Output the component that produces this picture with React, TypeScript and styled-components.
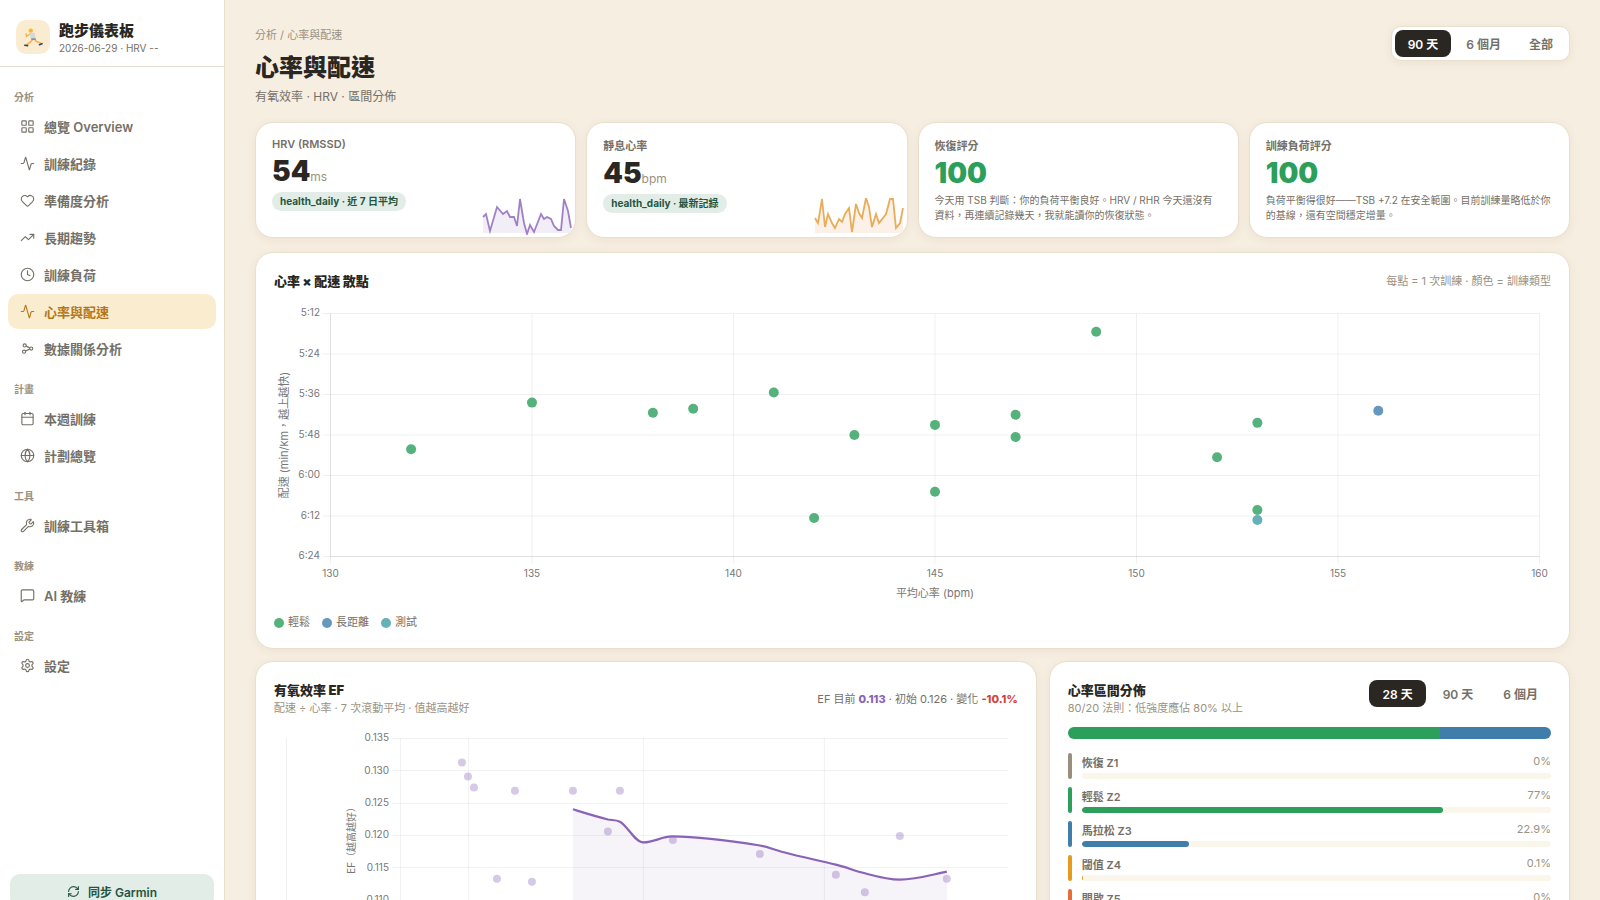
import React, { FC, ReactNode } from 'react'
import styled, { createGlobalStyle } from 'styled-components'
import {
  Activity,
  Calendar,
  Clock,
  Globe,
  Heart,
  LayoutGrid,
  MessageSquare,
  RefreshCw,
  Settings,
  TrendingUp,
  Wrench,
} from 'lucide-react'

const color = {
  ink: '#2a2723',
  text: '#757067',
  muted: '#9a9282',
  line: '#e8dfcc',
  green: '#2c9f5b',
  blue: '#3f7eab',
  teal: '#3d9ea8',
  purple: '#8a63b8',
}

const GlobalStyle = createGlobalStyle`
  *, *::before, *::after {
    box-sizing: border-box;
  }

  html {
    scrollbar-width: none;
  }

  body {
    margin: 0;
    background: #f6eee1;
    color: ${color.ink};
    font-family: Inter, 'Noto Sans CJK TC', sans-serif;
    font-size: 13px;
  }

  button {
    font-family: inherit;
    cursor: pointer;
  }

  h1, h2, p {
    margin: 0;
  }
`

const Layout = styled.div`
  display: flex;
  align-items: flex-start;
`

const Sidebar = styled.aside`
  position: sticky;
  top: 0;
  display: flex;
  flex-direction: column;
  flex: none;
  width: 225px;
  height: calc(100vh + 20px);
  background: #fff;
  border-right: 1px solid ${color.line};
`

const Brand = styled.div`
  display: flex;
  align-items: center;
  gap: 9px;
  padding: 20px 16px 12px;
  border-bottom: 1px solid #e8dcd0;
`

const Logo = styled.div`
  display: flex;
  align-items: center;
  justify-content: center;
  width: 34px;
  height: 34px;
  border-radius: 10px;
  background: #faecd0;
`

const BrandName = styled.div`
  font-size: 15px;
  font-weight: 900;
  line-height: 22px;
`

const BrandMeta = styled.div`
  color: ${color.text};
  font-size: 10px;
  line-height: 12px;
`

const Nav = styled.nav`
  flex: 1;
  padding: 14px 8px;
`

const NavSection = styled.div`
  display: flex;
  flex-direction: column;
  gap: 2px;
`

const NavHeading = styled.div`
  padding: 8px 6px 2px;
  color: ${color.muted};
  font-size: 10px;
  font-weight: 600;
  line-height: 16px;

  ${NavSection} + ${NavSection} & {
    padding-top: 15px;
  }
`

const NavItem = styled.a<{ $active?: boolean }>`
  display: flex;
  align-items: center;
  gap: 9px;
  height: 35px;
  padding: 0 12px;
  border-radius: 10px;
  background: ${(props) => (props.$active ? '#faedcf' : 'transparent')};
  color: ${(props) => (props.$active ? '#b4761a' : color.text)};
  font-size: 13px;
  font-weight: 600;
  text-decoration: none;
`

const SidebarFooter = styled.div`
  padding: 10px 10px 12px;
`

const SyncButton = styled.button`
  display: flex;
  align-items: center;
  justify-content: center;
  gap: 8px;
  width: 100%;
  height: 34px;
  border: 0;
  border-radius: 10px;
  background: #e2ede7;
  color: #24553f;
  font-size: 12px;
  font-weight: 600;
`

const Main = styled.main`
  flex: 1;
  min-width: 0;
  padding: 26px 30px 40px;
`

const PageHeader = styled.header`
  display: flex;
  align-items: flex-start;
  justify-content: space-between;
  margin-bottom: 17px;
`

const Crumb = styled.div`
  color: ${color.muted};
  font-size: 11px;
  line-height: 18px;
`

const PageTitle = styled.h1`
  margin: 7px 0 3px;
  font-size: 24px;
  font-weight: 900;
  line-height: 34px;
`

const PageSub = styled.p`
  color: ${color.text};
  font-size: 12px;
  line-height: 17px;
`

const Segmented = styled.div<{ $boxed?: boolean }>`
  display: flex;
  gap: ${(props) => (props.$boxed ? 2 : 4)}px;

  ${(props) =>
    props.$boxed &&
    `
    padding: 3px;
    border: 1px solid ${color.line};
    border-radius: 10px;
    background: #fff;
    box-shadow: 0 2px 8px rgba(120, 90, 40, 0.08);
  `}
`

const Segment = styled.button<{ $active?: boolean }>`
  height: 27px;
  padding: 0 13px;
  border: 0;
  border-radius: 8px;
  background: ${(props) => (props.$active ? color.ink : 'transparent')};
  color: ${(props) => (props.$active ? '#fff' : color.text)};
  font-size: 12px;
  font-weight: 600;
`

const Card = styled.section`
  position: relative;
  overflow: hidden;
  padding: 18px;
  border: 1px solid ${color.line};
  border-radius: 18px;
  background: #fff;
  box-shadow: 0 2px 10px rgba(120, 90, 40, 0.07);
`

const KpiGrid = styled.div`
  display: grid;
  grid-template-columns: repeat(4, 1fr);
  gap: 10px;
  margin-bottom: 14px;
`

const KpiCard = styled(Card)`
  padding: 14px 16px;
`

const KpiLabel = styled.div`
  color: ${color.text};
  font-size: 11px;
  font-weight: 600;
`

const KpiValue = styled.div<{ $good?: boolean }>`
  margin-top: 5px;
  color: ${(props) => (props.$good ? color.green : color.ink)};
  font-size: 28px;
  font-weight: 900;
  line-height: 31px;
`

const Unit = styled.span`
  color: ${color.muted};
  font-size: 12px;
  font-weight: 400;
`

const Tag = styled.div`
  width: fit-content;
  padding: 0 8px;
  border-radius: 10px;
  background: #e2ede7;
  color: #24553f;
  font-size: 10px;
  font-weight: 700;
  line-height: 19px;
`

const KpiNote = styled.p`
  margin-top: 4px;
  color: ${color.text};
  font-size: 10px;
  line-height: 15px;
`

const Spark = styled.svg`
  position: absolute;
  right: 2px;
  bottom: 2px;
`

const CardHeader = styled.div<{ $gap: number }>`
  display: flex;
  align-items: center;
  justify-content: space-between;
  margin-bottom: ${(props) => props.$gap}px;

  ${Segmented} {
    align-self: flex-start;
  }
`

const CardTitle = styled.h2`
  font-size: 13px;
  font-weight: 900;
  line-height: 20px;
`

const CardSub = styled.p`
  color: ${color.muted};
  font-size: 11px;
  line-height: 16px;
`

const CardStat = styled.p`
  color: ${color.text};
  font-size: 11px;
`

const Strong = styled.strong<{ $tone: string }>`
  color: ${(props) => props.$tone};
  font-weight: 800;
`

const Chart = styled.svg`
  display: block;
  width: 100%;
  height: auto;

  text {
    fill: #777;
    font-size: 10px;
  }

  .axis-title {
    font-size: 11px;
  }
`

const Legend = styled.div`
  display: flex;
  gap: 12px;
  margin-top: 10px;
`

const LegendItem = styled.span<{ $tone: string }>`
  display: flex;
  align-items: center;
  gap: 4px;
  color: ${color.text};
  font-size: 11px;
  line-height: 15px;

  &::before {
    width: 10px;
    height: 10px;
    border-radius: 50%;
    background: ${(props) => props.$tone};
    opacity: 0.8;
    content: '';
  }
`

const BottomGrid = styled.div`
  display: grid;
  grid-template-columns: minmax(0, 3fr) minmax(0, 2fr);
  gap: 12px;
  margin-top: 12px;
`

const StackBar = styled.div`
  display: flex;
  height: 12px;
  margin-bottom: 14px;
  overflow: hidden;
  border-radius: 6px;
`

const Fill = styled.div<{ $tone: string }>`
  height: 100%;
  background: ${(props) => props.$tone};
`

const ZoneList = styled.div`
  display: flex;
  flex-direction: column;
  gap: 8px;
`

const Zone = styled.div`
  display: flex;
  gap: 10px;
`

const ZoneMark = styled.div<{ $tone: string }>`
  width: 4px;
  border-radius: 2px;
  background: ${(props) => props.$tone};
`

const ZoneBody = styled.div`
  flex: 1;
`

const ZoneRow = styled.div`
  display: flex;
  justify-content: space-between;
  height: 20px;
  color: ${color.text};
  font-size: 11px;
  font-weight: 600;
  line-height: 20px;
`

const ZonePercent = styled.span`
  color: ${color.muted};
  font-weight: 400;
  line-height: 16px;
`

const Track = styled.div`
  height: 6px;
  overflow: hidden;
  border-radius: 3px;
  background: #fbf6ec;

  ${Fill} {
    border-radius: 3px;
  }
`

const navSections = [
  {
    title: '分析',
    items: [
      { label: '總覽 Overview', Icon: LayoutGrid },
      { label: '訓練紀錄', Icon: Activity },
      { label: '準備度分析', Icon: Heart },
      { label: '長期趨勢', Icon: TrendingUp },
      { label: '訓練負荷', Icon: Clock },
      { label: '心率與配速', Icon: Activity, active: true },
      { label: '數據關係分析', Icon: null },
    ],
  },
  {
    title: '計畫',
    items: [
      { label: '本週訓練', Icon: Calendar },
      { label: '計劃總覽', Icon: Globe },
    ],
  },
  { title: '工具', items: [{ label: '訓練工具箱', Icon: Wrench }] },
  { title: '教練', items: [{ label: 'AI 教練', Icon: MessageSquare }] },
  { title: '設定', items: [{ label: '設定', Icon: Settings }] },
]

const hrvTrend =
  '1,19 4,16 8,33 15,9 21,16 25,13 28,19 32,19 35,28 38,1 42,25 45,36 48,27 52,34 59,16 62,21 65,19 69,21 72,28 76,32 79,32 82,1 86,13 89,30'

const rhrTrend =
  '1,20 4,25 8,1 11,29 14,16 18,25 21,30 25,21 28,24 31,16 35,10 38,34 42,6 45,15 48,20 52,0 55,9 58,29 62,16 65,25 72,16 76,1 79,1 82,30 86,25 89,10'

// [average heart rate, pace in minutes per km]
const runs: [number, number, string][] = [
  [132, 5.87, color.green],
  [135, 5.64, color.green],
  [138, 5.69, color.green],
  [139, 5.67, color.green],
  [141, 5.59, color.green],
  [142, 6.21, color.green],
  [143, 5.8, color.green],
  [145, 5.75, color.green],
  [145, 6.08, color.green],
  [147, 5.7, color.green],
  [147, 5.81, color.green],
  [149, 5.29, color.green],
  [152, 5.91, color.green],
  [153, 5.74, color.green],
  [153, 6.17, color.green],
  [153, 6.22, color.teal],
  [156, 5.68, color.blue],
]

const paceTicks = ['5:12', '5:24', '5:36', '5:48', '6:00', '6:12', '6:24']
const bpmTicks = [130, 135, 140, 145, 150, 155, 160]

// [x on the time axis, EF]
const efPoints = [
  [188, 0.1313],
  [194, 0.1291],
  [200, 0.1274],
  [223, 0.1133],
  [241, 0.1269],
  [258, 0.1128],
  [299, 0.1269],
  [334, 0.1206],
  [346, 0.1269],
  [399, 0.1193],
  [486, 0.1171],
  [562, 0.1139],
  [591, 0.1112],
  [626, 0.1199],
  [673, 0.1133],
]

const efTicks = [0.135, 0.13, 0.125, 0.12, 0.115, 0.11, 0.105]

const efLine =
  'M299 83.3 C311 87 322 90.5 334 93.5 C338 94.4 342 93.6 346 95.7 C354 100 361 116.5 369.5 116.5 C380 116.5 388 110.5 398 110.5 C428 111 457 115 486 119.5 C495 121 502 124.5 511 126.5 C528 131 545 134.5 562 138.7 C572 141 581 145 591 147.3 C603 150.5 614 153.7 626 153.7 C642 153.7 657 149 673 145.7'

const zones = [
  { name: '恢復 Z1', percent: 0, tone: '#9a8f7f' },
  { name: '輕鬆 Z2', percent: 77, tone: color.green },
  { name: '馬拉松 Z3', percent: 22.9, tone: color.blue },
  { name: '閾值 Z4', percent: 0.1, tone: '#e69a1f' },
  { name: '間歇 Z5', percent: 0, tone: '#e86c3a' },
]

const Runner = () => (
  <svg width="20" height="20" viewBox="0 0 20 20" fill="none" strokeLinecap="round" strokeLinejoin="round">
    <path d="M7 7 3.500 9.500 3.200 7" stroke="#f3b445" strokeWidth="1.500" />
    <path d="M10 12 7.500 15 4 17.500M11 11.500l2.500 3 4 1.500" stroke="#efb45c" strokeWidth="1.700" />
    <path d="M7.500 6.500h3.500l1 5-3.500.5z" fill="#d3d7e0" stroke="#d3d7e0" strokeWidth="1.600" />
    <path d="M9 12.200h3" stroke="#8b90a0" strokeWidth="1.800" />
    <circle cx="7.800" cy="3.600" r="2.200" fill="#f7b733" />
    <path d="M1.800 18.200 4.600 18.600M16.500 17.700l2.500-1" stroke="#343f74" strokeWidth="1.600" />
  </svg>
)

const RelationIcon = () => (
  <svg width="15" height="15" viewBox="0 0 24 24" fill="none" stroke="currentColor" strokeWidth="1.800">
    <circle cx="7.500" cy="7" r="2.500" />
    <circle cx="6.500" cy="17" r="2.500" />
    <circle cx="18" cy="12" r="2.500" />
    <path d="M9.800 8.200 15.700 11M8.800 16l6.900-3" />
  </svg>
)

const Sparkline: FC<{ points: string; tone: string; fill: string }> = ({ points, tone, fill }) => (
  <Spark width="91" height="37" viewBox="0 0 91 37" aria-hidden="true">
    <polygon points={`1,35 ${points} 89,35`} fill={fill} />
    <polyline points={points} fill="none" stroke={tone} strokeWidth="1.800" opacity="0.8" />
  </Spark>
)

const Kpi: FC<{ label: string; value: number; unit?: string; good?: boolean; children: ReactNode }> = ({
  label,
  value,
  unit,
  good,
  children,
}) => (
  <KpiCard>
    <KpiLabel>{label}</KpiLabel>
    <KpiValue $good={good}>
      {value}
      {unit && <Unit>{unit}</Unit>}
    </KpiValue>
    {children}
  </KpiCard>
)

const ScatterChart = () => {
  const x = (bpm: number) => 56.5 + ((bpm - 130) / 30) * 1209
  const y = (pace: number) => 15.5 + ((pace - 5.2) / 1.2) * 243

  return (
    <Chart viewBox="0 0 1277 307" role="img" aria-label="心率 × 配速 散點">
      <g stroke="rgba(0,0,0,0.06)">
        {paceTicks.map((tick, i) => (
          <path key={tick} d={`M49 ${15.5 + i * 40.5}H1265.5`} />
        ))}
        {bpmTicks.map((tick) => (
          <path key={tick} d={`M${x(tick)} 15.500V266`} />
        ))}
        <path d="M56.500 15.500V258.500H1265.500" fill="none" />
      </g>
      {paceTicks.map((tick, i) => (
        <text key={tick} x="46" y={18 + i * 40.5} textAnchor="end">
          {tick}
        </text>
      ))}
      {bpmTicks.map((tick) => (
        <text key={tick} x={x(tick)} y="279" textAnchor="middle">
          {tick}
        </text>
      ))}
      <text className="axis-title" x="661" y="299" textAnchor="middle">
        平均心率 (bpm)
      </text>
      <text className="axis-title" transform="translate(14 137) rotate(-90)" textAnchor="middle">
        配速 (min/km，越上越快)
      </text>
      {runs.map(([bpm, pace, tone]) => (
        <circle key={`${bpm}-${pace}`} cx={x(bpm)} cy={y(pace)} r="5" fill={tone} opacity="0.8" />
      ))}
    </Chart>
  )
}

const EfChart = () => {
  const y = (ef: number) => 12.5 + ((0.135 - ef) / 0.005) * 32.3

  return (
    <Chart viewBox="0 0 744 260" role="img" aria-label="有氧效率 EF">
      <g stroke="rgba(0,0,0,0.06)">
        {efTicks.map((tick) => (
          <path key={tick} d={`M118 ${Math.floor(y(tick)) + 0.5}H734.500`} />
        ))}
        {[12.5, 126.5, 194.5, 369.5, 550.5].map((x) => (
          <path key={x} d={`M${x} 12V220`} />
        ))}
      </g>
      {efTicks.map((tick) => (
        <text key={tick} x="115" y={y(tick) + 3} textAnchor="end">
          {tick.toFixed(3)}
        </text>
      ))}
      <text transform="translate(81 112) rotate(-90)" textAnchor="middle">
        EF（越高越好）
      </text>
      <path d={`${efLine}V220H299Z`} fill={color.purple} opacity="0.08" />
      {efPoints.map(([x, ef]) => (
        <circle key={x} cx={x} cy={y(ef)} r="4" fill={color.purple} opacity="0.35" />
      ))}
      <path d={efLine} fill="none" stroke={color.purple} strokeWidth="2.200" />
    </Chart>
  )
}

const App: FC = () => (
  <>
    <GlobalStyle />
    <Layout lang="zh-Hant-TW">
      <Sidebar>
        <Brand>
          <Logo>
            <Runner />
          </Logo>
          <div>
            <BrandName>跑步儀表板</BrandName>
            <BrandMeta>2026-06-29 · HRV --</BrandMeta>
          </div>
        </Brand>
        <Nav>
          {navSections.map((section) => (
            <NavSection key={section.title}>
              <NavHeading>{section.title}</NavHeading>
              {section.items.map(({ label, Icon, active }: any) => (
                <NavItem key={label} href="#" $active={active}>
                  {Icon ? <Icon size={15} strokeWidth={1.8} /> : <RelationIcon />}
                  {label}
                </NavItem>
              ))}
            </NavSection>
          ))}
        </Nav>
        <SidebarFooter>
          <SyncButton type="button">
            <RefreshCw size={13} />
            同步 Garmin
          </SyncButton>
        </SidebarFooter>
      </Sidebar>

      <Main>
        <PageHeader>
          <div>
            <Crumb>分析 / 心率與配速</Crumb>
            <PageTitle>心率與配速</PageTitle>
            <PageSub>有氧效率 · HRV · 區間分佈</PageSub>
          </div>
          <Segmented $boxed>
            <Segment $active>90 天</Segment>
            <Segment>6 個月</Segment>
            <Segment>全部</Segment>
          </Segmented>
        </PageHeader>

        <KpiGrid>
          <Kpi label="HRV (RMSSD)" value={54} unit="ms">
            <Tag>health_daily · 近 7 日平均</Tag>
            <Sparkline points={hrvTrend} tone={color.purple} fill="#f2eef8" />
          </Kpi>
          <Kpi label="靜息心率" value={45} unit="bpm">
            <Tag>health_daily · 最新記錄</Tag>
            <Sparkline points={rhrTrend} tone="#e39a32" fill="#fbf1e8" />
          </Kpi>
          <Kpi label="恢復評分" value={100} good>
            <KpiNote>
              今天用 TSB 判斷：你的負荷平衡良好。HRV / RHR 今天還沒有資料，再連續記錄幾天，我就能讀你的恢復狀態。
            </KpiNote>
          </Kpi>
          <Kpi label="訓練負荷評分" value={100} good>
            <KpiNote>
              負荷平衡得很好——TSB +7.2 在安全範圍。目前訓練量略低於你的基線，還有空間穩定增量。
            </KpiNote>
          </Kpi>
        </KpiGrid>

        <Card>
          <CardHeader $gap={7}>
            <CardTitle>心率 × 配速 散點</CardTitle>
            <CardSub>每點 = 1 次訓練 · 顏色 = 訓練類型</CardSub>
          </CardHeader>
          <ScatterChart />
          <Legend>
            <LegendItem $tone={color.green}>輕鬆</LegendItem>
            <LegendItem $tone={color.blue}>長距離</LegendItem>
            <LegendItem $tone={color.teal}>測試</LegendItem>
          </Legend>
        </Card>

        <BottomGrid>
          <Card>
            <CardHeader $gap={10}>
              <div>
                <CardTitle>有氧效率 EF</CardTitle>
                <CardSub>配速 ÷ 心率 · 7 次滾動平均 · 值越高越好</CardSub>
              </div>
              <CardStat>
                EF 目前 <Strong $tone={color.purple}>0.113</Strong> · 初始 0.126 · 變化{' '}
                <Strong $tone="#d2453d">-10.1%</Strong>
              </CardStat>
            </CardHeader>
            <EfChart />
          </Card>

          <Card>
            <CardHeader $gap={11}>
              <div>
                <CardTitle>心率區間分佈</CardTitle>
                <CardSub>80/20 法則：低強度應佔 80% 以上</CardSub>
              </div>
              <Segmented>
                <Segment $active>28 天</Segment>
                <Segment>90 天</Segment>
                <Segment>6 個月</Segment>
              </Segmented>
            </CardHeader>
            <StackBar>
              {zones.map((zone) => (
                <Fill key={zone.name} $tone={zone.tone} style={{ width: `${zone.percent}%` }} />
              ))}
            </StackBar>
            <ZoneList>
              {zones.map((zone) => (
                <Zone key={zone.name}>
                  <ZoneMark $tone={zone.tone} />
                  <ZoneBody>
                    <ZoneRow>
                      {zone.name}
                      <ZonePercent>{zone.percent}%</ZonePercent>
                    </ZoneRow>
                    <Track>
                      <Fill $tone={zone.tone} style={{ width: `${zone.percent}%` }} />
                    </Track>
                  </ZoneBody>
                </Zone>
              ))}
            </ZoneList>
          </Card>
        </BottomGrid>
      </Main>
    </Layout>
  </>
)

export default App
